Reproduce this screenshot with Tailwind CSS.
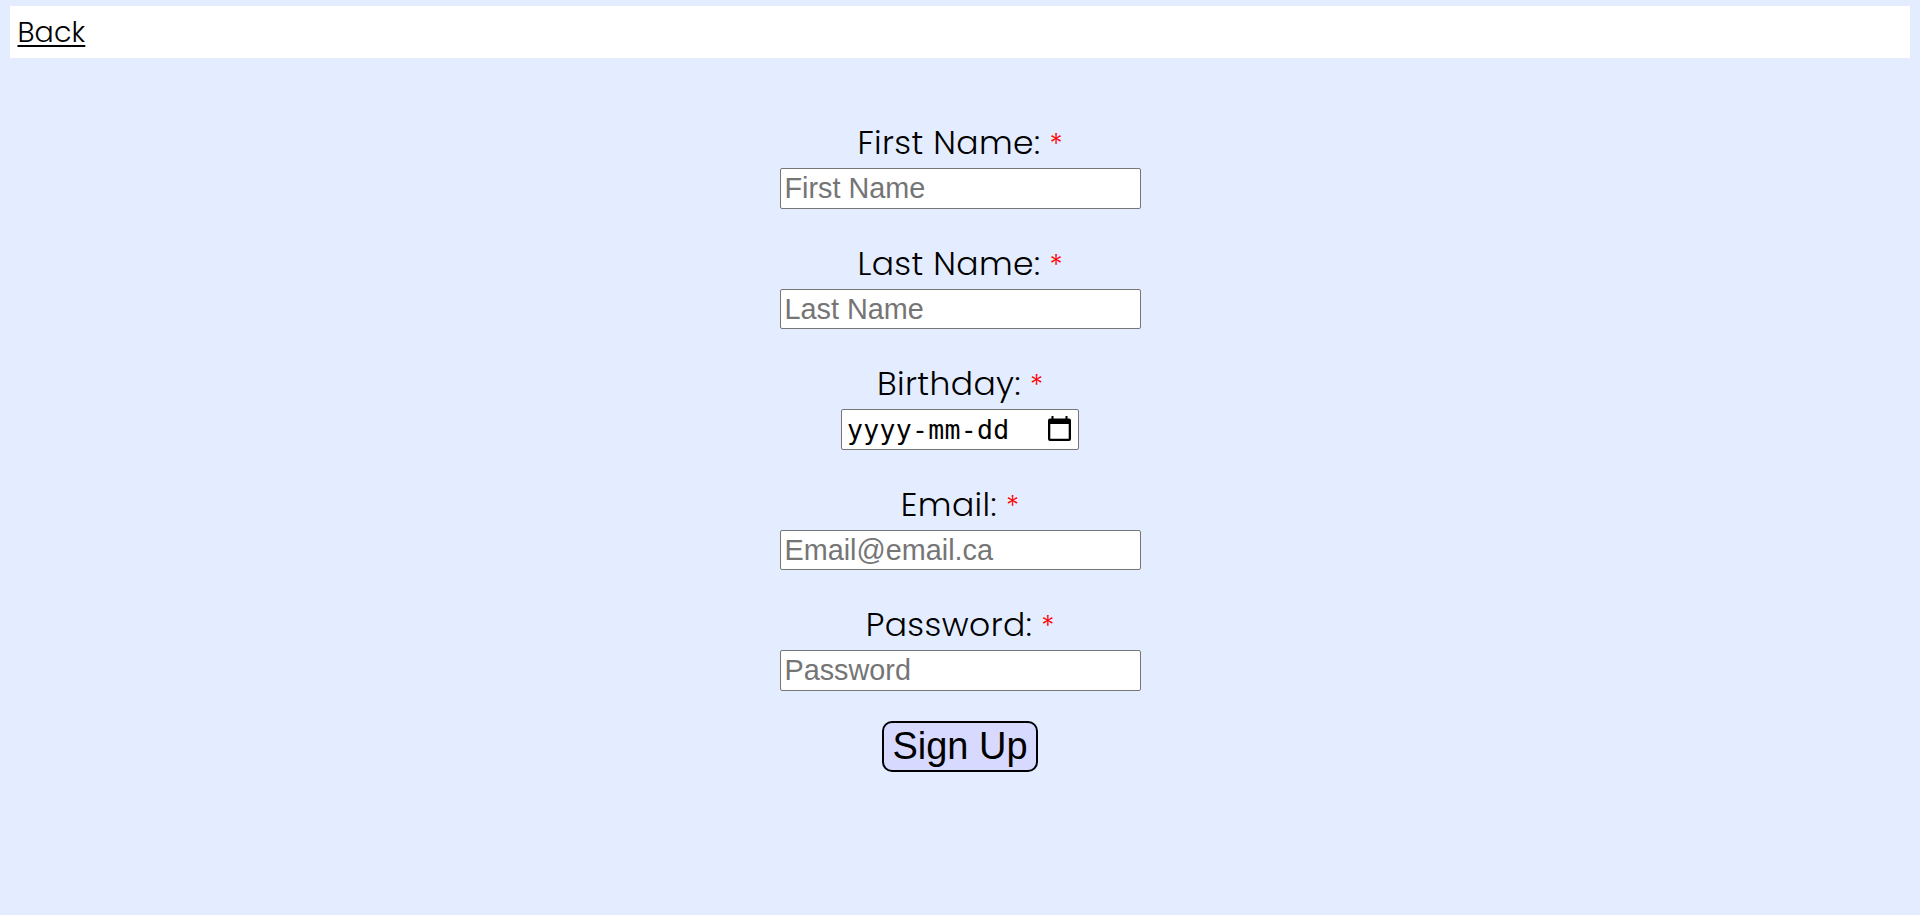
<!DOCTYPE html>
<html lang="en">
<head>
<meta charset="utf-8">
<title>Sign Up</title>
<script src="https://cdn.jsdelivr.net/npm/@tailwindcss/browser@4"></script>
</head>
<body class="min-h-screen bg-[#e4edff] pt-[6px] font-['Poppins','Inter',sans-serif] font-light text-black [font-feature-settings:'cv11']">
<nav class="mx-[10px] flex h-[52px] items-center bg-white pl-[7.5px]">
  <a href="#" class="text-[28.5px] leading-[42px] tracking-[0.1px] underline decoration-2 underline-offset-[3px]">Back</a>
</nav>
<form class="flex flex-col items-center pt-[62px]">
  <div class="flex h-[121px] flex-col items-center">
    <label for="first" class="flex h-[48px] items-center gap-[9px] whitespace-nowrap text-[33px] leading-[46px]"><span class="pb-[2px] tracking-[0.4px]">First Name:</span><span class="pt-[2px] text-[28px] text-[#ff0000]">*</span></label>
    <input id="first" placeholder="First Name" class="h-[41px] w-[361px] rounded-[2px] border border-[#767676] bg-white px-[4px] font-['Liberation_Sans',sans-serif] text-[28.8px] font-normal leading-[33px] placeholder:text-[#757575]">
  </div>
  <div class="flex h-[120px] flex-col items-center">
    <label for="last" class="flex h-[48px] items-center gap-[9px] whitespace-nowrap text-[33px] leading-[46px]"><span class="pb-[2px] tracking-[0.4px]">Last Name:</span><span class="pt-[2px] text-[28px] text-[#ff0000]">*</span></label>
    <input id="last" placeholder="Last Name" class="h-[40px] w-[361px] rounded-[2px] border border-[#767676] bg-white px-[4px] font-['Liberation_Sans',sans-serif] text-[28.8px] font-normal leading-[33px] placeholder:text-[#757575]">
  </div>
  <div class="flex h-[121px] flex-col items-center">
    <label class="flex h-[48px] items-center gap-[9px] whitespace-nowrap text-[33px] leading-[46px]"><span class="pb-[2px] tracking-[0.4px]">Birthday:</span><span class="pt-[2px] text-[28px] text-[#ff0000]">*</span></label>
    <div class="flex h-[41px] w-[238px] items-center justify-between rounded-[2px] border border-[#767676] bg-white pl-[5px] pr-[7px]">
      <span class="font-['DejaVu_Sans_Mono',monospace] text-[26.5px] font-normal leading-[33px] tracking-[0.3px]">yyyy-mm-dd</span>
      <svg class="mb-[2px] h-[25px] w-[23px]" viewBox="0 0 23 25"><path fill="#000" fill-rule="evenodd" d="M3.5 0h2v2.500h12V0h2v2.500H21a2 2 0 0 1 2 2V23a2 2 0 0 1-2 2H2a2 2 0 0 1-2-2V4.500a2 2 0 0 1 2-2h1.500zM2.300 8v14.700h18.400V8z"/></svg>
    </div>
  </div>
  <div class="flex h-[120px] flex-col items-center">
    <label for="email" class="flex h-[48px] items-center gap-[9px] whitespace-nowrap text-[33px] leading-[46px]"><span class="pb-[2px] tracking-[0.4px]">Email:</span><span class="pt-[2px] text-[28px] text-[#ff0000]">*</span></label>
    <input id="email" placeholder="Email@email.ca" class="h-[40px] w-[361px] rounded-[2px] border border-[#767676] bg-white px-[4px] font-['Liberation_Sans',sans-serif] text-[28.8px] font-normal leading-[33px] placeholder:text-[#757575]">
  </div>
  <div class="flex h-[119px] flex-col items-center">
    <label for="password" class="flex h-[48px] items-center gap-[9px] whitespace-nowrap text-[33px] leading-[46px]"><span class="pb-[2px] tracking-[0.4px]">Password:</span><span class="pt-[2px] text-[28px] text-[#ff0000]">*</span></label>
    <input id="password" type="password" placeholder="Password" class="h-[41px] w-[361px] rounded-[2px] border border-[#767676] bg-white px-[4px] font-['Liberation_Sans',sans-serif] text-[28.8px] font-normal leading-[33px] placeholder:text-[#757575]">
  </div>
  <button type="button" class="h-[51px] w-[156px] whitespace-nowrap rounded-[10px] border-2 border-black bg-[#d8d9ff] pb-[1px] font-['Liberation_Sans',sans-serif] text-[38px] font-normal leading-[44px]">Sign Up</button>
</form>
</body>
</html>
